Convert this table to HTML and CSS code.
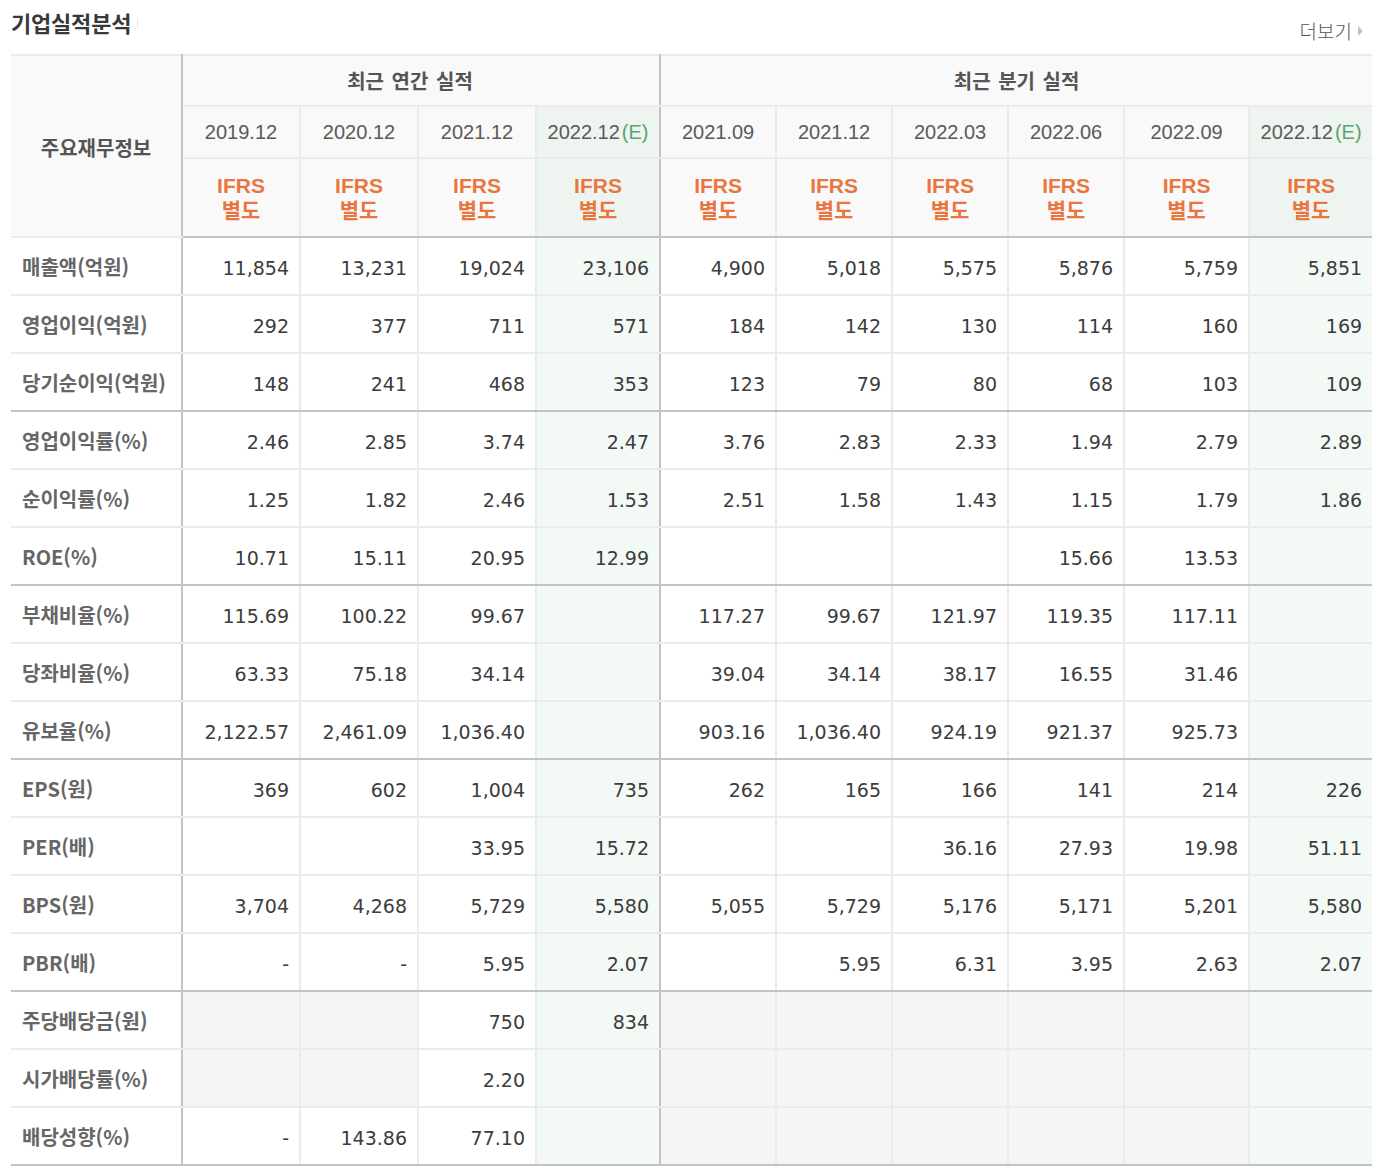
FILE: index.html
```html
<!DOCTYPE html>
<html lang="ko">
<head>
<meta charset="utf-8">
<title>기업실적분석</title>
<link rel="stylesheet" href="styles.css">
</head>
<body>
<div class="wrap">
  <div class="head">
    <h2 class="title">기업실적분석<span class="tick"></span></h2>
    <a class="more" href="#">더보기<span class="arr"></span></a>
  </div>
  <table class="fin">
    <colgroup>
      <col class="c0"><col class="c1"><col class="c1"><col class="c1"><col class="c2">
      <col class="c3"><col class="c3"><col class="c3"><col class="c3"><col class="c4"><col class="c5">
    </colgroup>
    <thead>
      <tr class="h1">
        <th rowspan="3" class="lab-h vr">주요재무정보</th>
        <th colspan="4" class="grp grp-a vr">최근 연간 실적</th>
        <th colspan="6" class="grp">최근 분기 실적</th>
      </tr>
      <tr class="h2">
        <th class="dt">2019.12</th><th class="dt">2020.12</th><th class="dt">2021.12</th><th class="dt est vr">2022.12<em>(E)</em></th>
        <th class="dt">2021.09</th><th class="dt">2021.12</th><th class="dt">2022.03</th><th class="dt">2022.06</th><th class="dt">2022.09</th><th class="dt est">2022.12<em>(E)</em></th>
      </tr>
      <tr class="h3">
        <th class="ifrs">IFRS<br>별도</th><th class="ifrs">IFRS<br>별도</th><th class="ifrs">IFRS<br>별도</th><th class="ifrs est vr">IFRS<br>별도</th>
        <th class="ifrs">IFRS<br>별도</th><th class="ifrs">IFRS<br>별도</th><th class="ifrs">IFRS<br>별도</th><th class="ifrs">IFRS<br>별도</th><th class="ifrs">IFRS<br>별도</th><th class="ifrs est">IFRS<br>별도</th>
      </tr>
    </thead>
    <tbody>
      <tr><th class="vr">매출액(억원)</th><td>11,854</td><td>13,231</td><td>19,024</td><td class="est vr">23,106</td><td>4,900</td><td>5,018</td><td>5,575</td><td>5,876</td><td>5,759</td><td class="est">5,851</td></tr>
      <tr><th class="vr">영업이익(억원)</th><td>292</td><td>377</td><td>711</td><td class="est vr">571</td><td>184</td><td>142</td><td>130</td><td>114</td><td>160</td><td class="est">169</td></tr>
      <tr class="sep"><th class="vr">당기순이익(억원)</th><td>148</td><td>241</td><td>468</td><td class="est vr">353</td><td>123</td><td>79</td><td>80</td><td>68</td><td>103</td><td class="est">109</td></tr>
      <tr><th class="vr">영업이익률(%)</th><td>2.46</td><td>2.85</td><td>3.74</td><td class="est vr">2.47</td><td>3.76</td><td>2.83</td><td>2.33</td><td>1.94</td><td>2.79</td><td class="est">2.89</td></tr>
      <tr><th class="vr">순이익률(%)</th><td>1.25</td><td>1.82</td><td>2.46</td><td class="est vr">1.53</td><td>2.51</td><td>1.58</td><td>1.43</td><td>1.15</td><td>1.79</td><td class="est">1.86</td></tr>
      <tr class="sep"><th class="vr">ROE(%)</th><td>10.71</td><td>15.11</td><td>20.95</td><td class="est vr">12.99</td><td></td><td></td><td></td><td>15.66</td><td>13.53</td><td class="est"></td></tr>
      <tr><th class="vr">부채비율(%)</th><td>115.69</td><td>100.22</td><td>99.67</td><td class="est vr"></td><td>117.27</td><td>99.67</td><td>121.97</td><td>119.35</td><td>117.11</td><td class="est"></td></tr>
      <tr><th class="vr">당좌비율(%)</th><td>63.33</td><td>75.18</td><td>34.14</td><td class="est vr"></td><td>39.04</td><td>34.14</td><td>38.17</td><td>16.55</td><td>31.46</td><td class="est"></td></tr>
      <tr class="sep"><th class="vr">유보율(%)</th><td>2,122.57</td><td>2,461.09</td><td>1,036.40</td><td class="est vr"></td><td>903.16</td><td>1,036.40</td><td>924.19</td><td>921.37</td><td>925.73</td><td class="est"></td></tr>
      <tr><th class="vr">EPS(원)</th><td>369</td><td>602</td><td>1,004</td><td class="est vr">735</td><td>262</td><td>165</td><td>166</td><td>141</td><td>214</td><td class="est">226</td></tr>
      <tr><th class="vr">PER(배)</th><td></td><td></td><td>33.95</td><td class="est vr">15.72</td><td></td><td></td><td>36.16</td><td>27.93</td><td>19.98</td><td class="est">51.11</td></tr>
      <tr><th class="vr">BPS(원)</th><td>3,704</td><td>4,268</td><td>5,729</td><td class="est vr">5,580</td><td>5,055</td><td>5,729</td><td>5,176</td><td>5,171</td><td>5,201</td><td class="est">5,580</td></tr>
      <tr class="sep"><th class="vr">PBR(배)</th><td>-</td><td>-</td><td>5.95</td><td class="est vr">2.07</td><td></td><td>5.95</td><td>6.31</td><td>3.95</td><td>2.63</td><td class="est">2.07</td></tr>
      <tr><th class="vr">주당배당금(원)</th><td class="na"></td><td class="na"></td><td>750</td><td class="est vr">834</td><td class="na"></td><td class="na"></td><td class="na"></td><td class="na"></td><td class="na"></td><td class="est"></td></tr>
      <tr><th class="vr">시가배당률(%)</th><td class="na"></td><td class="na"></td><td>2.20</td><td class="est vr"></td><td class="na"></td><td class="na"></td><td class="na"></td><td class="na"></td><td class="na"></td><td class="est"></td></tr>
      <tr class="last"><th class="vr">배당성향(%)</th><td>-</td><td>143.86</td><td>77.10</td><td class="est vr"></td><td class="na"></td><td class="na"></td><td class="na"></td><td class="na"></td><td class="na"></td><td class="est"></td></tr>
    </tbody>
  </table>
</div>
</body>
</html>
```

FILE: styles.css
```css
html, body {
  margin: 0;
  padding: 0;
  background: #ffffff;
}

.wrap {
  padding-left: 11px;
  width: 1361px;
}

.head {
  display: flex;
  justify-content: space-between;
  align-items: flex-start;
  height: 54px;
}

.title {
  margin: 0;
  padding-top: 8px;
  font-family: "Noto Sans CJK KR", "Noto Sans", sans-serif;
  font-size: 22px;
  line-height: 28px;
  font-weight: 700;
  color: #383838;
  letter-spacing: -0.2px;
  display: flex;
  align-items: center;
}

.tick {
  display: inline-block;
  width: 1px;
  height: 9px;
  background: #e4e4e4;
  margin-left: 6px;
  margin-top: 2px;
}

.more {
  padding-top: 19px;
  font-family: "Noto Sans CJK KR", sans-serif;
  font-size: 19px;
  line-height: 24px;
  font-weight: 300;
  color: #555555;
  text-decoration: none;
  display: flex;
  align-items: center;
  margin-right: 9px;
}

.arr {
  display: inline-block;
  width: 0;
  height: 0;
  border-top: 5px solid transparent;
  border-bottom: 5px solid transparent;
  border-left: 5px solid #c4c4c4;
  margin-left: 6px;
}

.fin {
  width: 1361px;
  table-layout: fixed;
  border-collapse: collapse;
  border-top: 2px solid #c3c3c3;
  border-bottom: 2px solid #c3c3c3;
}

.c0 { width: 171px; }
.c1 { width: 118px; }
.c2 { width: 124px; }
.c3 { width: 116px; }
.c4 { width: 125px; }
.c5 { width: 123px; }

.fin th,
.fin td {
  padding: 0;
  border: 2px solid #ebebeb;
}

.fin tr > :first-child { border-left: none; }
.fin tr > :last-child { border-right: none; }

.fin thead th {
  background: #f9f9f9;
  color: #555555;
  text-align: center;
}

.fin .h1 th { height: 49px; }
.fin .h2 th { height: 50px; }
.fin .h3 th { height: 77px; }

.lab-h,
.grp {
  font-family: "Noto Sans CJK KR", sans-serif;
  font-size: 20px;
  font-weight: 700;
  letter-spacing: 0;
  word-spacing: 2px;
  color: #555555;
}

.fin .grp-a { padding-right: 22px; }
.fin .lab-h { padding-top: 2px; }

.fin .dt {
  font-family: "Liberation Sans", Arial, sans-serif;
  font-size: 20px;
  font-weight: 400;
  color: #5a5a5a;
}

.dt em {
  font-style: normal;
  color: #5aa36f;
  margin-left: 2px;
}

.fin .ifrs {
  font-family: "Liberation Sans", "Noto Sans CJK KR", sans-serif;
  font-size: 21px;
  line-height: 25px;
  font-weight: 700;
  color: #e9763f;
  padding-top: 0;
}

.fin thead th.est { background: #eef5f0; }

.fin .vr { border-right: 2px solid #c3c3c3; }

.fin tbody th {
  height: 54px;
  text-align: left;
  padding-left: 11px;
  padding-top: 2px;
  background: #ffffff;
  font-family: "Noto Sans CJK KR", sans-serif;
  font-size: 20px;
  line-height: 26px;
  font-weight: 700;
  letter-spacing: 0;
  color: #666666;
}

.fin tbody td {
  height: 53px;
  text-align: right;
  padding-right: 10px;
  padding-top: 3px;
  font-family: "DejaVu Sans", Verdana, sans-serif;
  font-size: 19px;
  line-height: 24px;
  color: #3c3c3c;
  background: #ffffff;
}

.fin tbody td.est { background: #f3f9f5; }
.fin tbody td.na { background: #f5f5f5; }

.fin tr.sep th,
.fin tr.sep td { border-bottom: 2px solid #c3c3c3; }

.fin thead tr.h3 th { border-bottom: 2px solid #c3c3c3; }

.fin tr.last th,
.fin tr.last td { border-bottom: 2px solid #c3c3c3; }
```
